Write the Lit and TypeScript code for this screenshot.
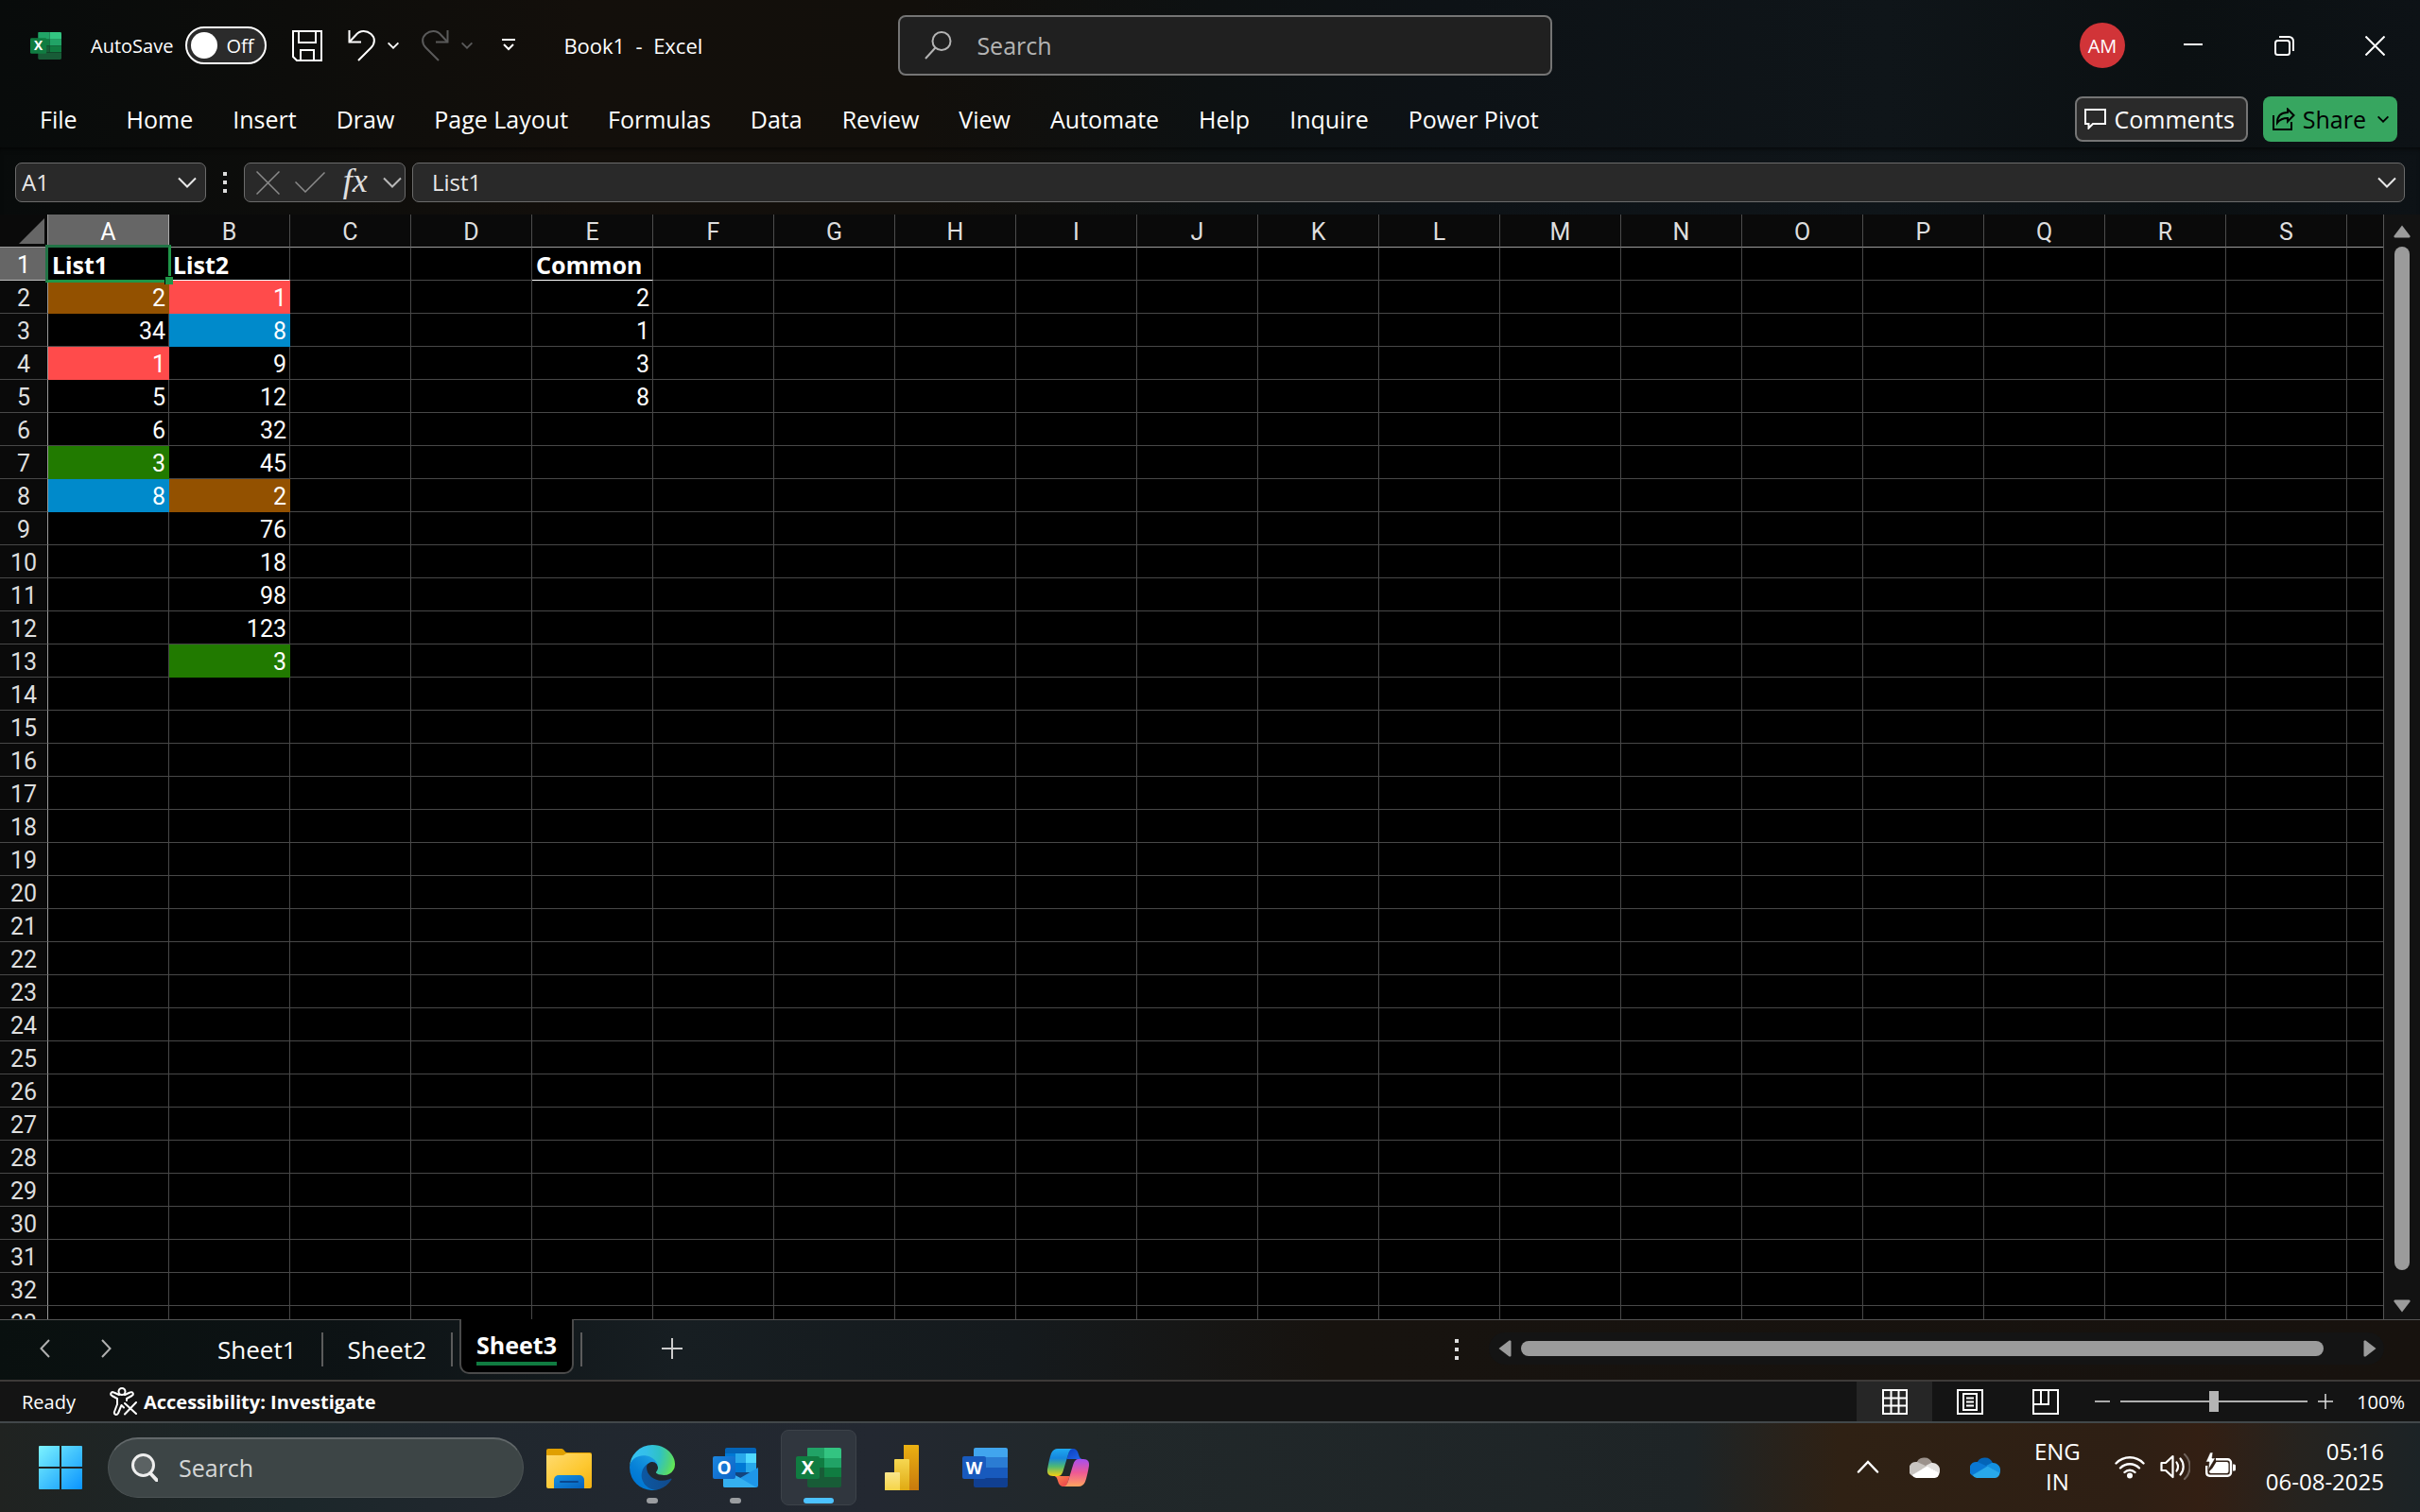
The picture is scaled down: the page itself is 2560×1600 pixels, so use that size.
import { LitElement, html, svg, css, nothing } from "lit";
import { customElement, state } from "lit/decorators.js";
import { classMap } from "lit/directives/class-map.js";

const chevron = (w: number, h: number, sw = 2) => html`<svg width=${w} height=${h} viewBox="0 0 20 12" fill="none" stroke="currentColor" stroke-width=${sw} aria-hidden="true"><path d="M1 1.5 10 10.5 19 1.5" /></svg>`;

const excelLogo = (size: number) => html`<svg width=${size} height=${size} viewBox="0 0 48 48" aria-hidden="true">
  <path d="M13 3h17v11H12V4a1 1 0 0 1 1-1z" fill="#21a366" />
  <path d="M30 3h16a2 2 0 0 1 2 2v9H30z" fill="#33c481" />
  <path d="M12 14h18v10H12z" fill="#107c41" /><path d="M30 14h18v10H30z" fill="#21a366" />
  <path d="M12 24h18v10H12z" fill="#185c37" /><path d="M30 24h18v10H30z" fill="#107c41" />
  <path d="M12 34h36v9a2 2 0 0 1-2 2H14a2 2 0 0 1-2-2z" fill="#185c37" />
  <rect x="0" y="12" width="25" height="24" rx="2" fill="#107c41" />
  <text x="12.5" y="31" text-anchor="middle" font-family="Open Sans, sans-serif" font-weight="700" font-size="20" fill="#fff">X</text>
</svg>`;

const baseStyles = css`
  *, *::before, *::after { box-sizing: border-box; }
  svg { display: block; flex: none; }
  button, input {
    font: inherit; color: inherit; background: none; border: 0; margin: 0; padding: 0; outline: none;
  }
  button { display: flex; align-items: center; justify-content: center; flex: none; white-space: nowrap; }
`;

type Fill = "brown" | "red" | "blue" | "green";
interface Cell { v: string; fill?: Fill; head?: boolean; }

const cells: Record<string, Cell> = {
  A1: { v: "List1", head: true }, B1: { v: "List2", head: true }, E1: { v: "Common", head: true },
  A2: { v: "2", fill: "brown" }, A3: { v: "34" }, A4: { v: "1", fill: "red" }, A5: { v: "5" },
  A6: { v: "6" }, A7: { v: "3", fill: "green" }, A8: { v: "8", fill: "blue" },
  B2: { v: "1", fill: "red" }, B3: { v: "8", fill: "blue" }, B4: { v: "9" }, B5: { v: "12" },
  B6: { v: "32" }, B7: { v: "45" }, B8: { v: "2", fill: "brown" }, B9: { v: "76" }, B10: { v: "18" },
  B11: { v: "98" }, B12: { v: "123" }, B13: { v: "3", fill: "green" },
  E2: { v: "2" }, E3: { v: "1" }, E4: { v: "3" }, E5: { v: "8" },
};
const columns = "ABCDEFGHIJKLMNOPQRS".split("");
const rows = Array.from({ length: 33 }, (_, i) => i + 1);

@customElement("sheet-grid")
export class SheetGrid extends LitElement {
  @state() private selected = "A1";

  static styles = [baseStyles, css`
    :host { display: flex; flex: 1; min-height: 0; background: #000; font-family: Roboto, sans-serif; font-size: 25px; }
    .pane { flex: 1; min-width: 0; overflow: hidden; border-right: 1px solid #555; }
    table { border-collapse: separate; border-spacing: 0; table-layout: fixed; width: 100%; }
    .c-head { width: 51px; }
    .c-col { width: 128px; }
    th, td { height: 35px; padding: 4px 0 0; line-height: 30px; overflow: visible; white-space: nowrap; border-right: 1px solid #484848; border-bottom: 1px solid #484848; }
    th { font-weight: 400; background: #0a0a0a; color: #dedede; text-align: center; }
    thead th { border-bottom-color: #9a9a9a; border-right-color: #4c4c4c; }
    tbody th, .corner { border-right-color: #9a9a9a; }
    th.on { background: #666; color: #fff; border-right-color: #aaa; border-bottom-color: #bbb; }
    .corner { padding: 0; }
    .corner svg { margin: 0 3px 0 auto; }
    td { text-align: right; padding: 4px 3px 0; color: #fff; }
    td.head { text-align: left; font-family: "Noto Sans", sans-serif; font-weight: 700; padding: 2px 4px 0; border-bottom-color: #fff; }
    td.brown { background: #935100; border-color: #935100; }
    td.red { background: #ff4b4b; border-color: #ff4b4b; }
    td.blue { background: #008acb; border-color: #008acb; }
    td.green { background: #217a00; border-color: #217a00; }
    td.rest, th.rest { border-right: 0; }
    td.sel { position: relative; }
    .ring { position: absolute; inset: -3px; border: 3px solid #1f9648; border-top-color: #217346; border-left-color: #217346; }
    .handle { position: absolute; right: -5px; bottom: -5px; width: 9px; height: 9px; background: #1f9648; border: 1px solid #000; border-width: 1px 0 0 1px; }
    .vscroll { width: 38px; background: #121212; display: flex; flex-direction: column; align-items: center; padding: 8px 0 4px; }
    .vscroll button { color: #9b9b9b; height: 20px; }
    .vscroll .thumb { width: 16px; flex: 1; border-radius: 8px; background: #9b9b9b; margin: 6px 0 28px; }
  `];

  render() {
    return html`
      <div class="pane">
        <table aria-label="Sheet3">
          <colgroup><col class="c-head" />${columns.map(() => html`<col class="c-col" />`)}<col /></colgroup>
          <thead><tr>
            <th class="corner" aria-label="Select all"><svg width="27" height="27" viewBox="0 0 27 27"><path d="M27 0v27H0z" fill="#666" /></svg></th>
            ${columns.map((c) => html`<th scope="col" class=${classMap({ on: this.selected.startsWith(c) })}>${c}</th>`)}
            <th class="rest"></th>
          </tr></thead>
          <tbody>
            ${rows.map((r) => html`<tr>
              <th scope="row" class=${classMap({ on: this.selected.slice(1) === String(r) })}>${r}</th>
              ${columns.map((c) => this.cell(c + r))}
              <td class="rest"></td>
            </tr>`)}
          </tbody>
        </table>
      </div>
      <div class="vscroll">
        <button aria-label="Scroll up"><svg width="18" height="14" viewBox="0 0 18 14"><path d="M9 0.5 17.4 11.5a1.3 1.3 0 0 1-1 2H1.600a1.300 1.300 0 0 1-1-2z" fill="currentColor" /></svg></button>
        <div class="thumb"></div>
        <button aria-label="Scroll down"><svg width="18" height="14" viewBox="0 0 18 14"><path d="M9 13.500 17.400 2.500a1.300 1.300 0 0 0-1-2H1.600a1.300 1.300 0 0 0-1 2z" fill="currentColor" /></svg></button>
      </div>`;
  }

  private cell(id: string) {
    const c = cells[id];
    const sel = this.selected === id;
    const cls = { head: !!c?.head, sel, [c?.fill ?? "plain"]: true };
    return html`<td class=${classMap(cls)} @click=${() => (this.selected = id)}>${c?.v ?? nothing}${sel ? html`<span class="ring"></span><span class="handle"></span>` : nothing}</td>`;
  }
}

const folderIcon = html`<svg width="48" height="48" viewBox="0 0 48 48" aria-hidden="true">
  <defs><linearGradient id="fo" x1="0" y1="0" x2="1" y2="1"><stop offset="0" stop-color="#ffdb70" /><stop offset=".6" stop-color="#fdc830" /><stop offset="1" stop-color="#f3b112" /></linearGradient>
  <linearGradient id="fb" x1="0" y1="0" x2="1" y2="1"><stop offset="0" stop-color="#1591e0" /><stop offset="1" stop-color="#0560bd" /></linearGradient></defs>
  <path d="M0 6a2 2 0 0 1 2-2h14c3 0 3 4 6 4h24a2 2 0 0 1 2 2v6H0z" fill="#e0a000" />
  <path d="M0 11h17c2 0 3-2 5-2h24a2 2 0 0 1 2 2v33a2 2 0 0 1-2 2H2a2 2 0 0 1-2-2z" fill="url(#fo)" />
  <path d="M8 46V37a5 5 0 0 1 5-5h22a5 5 0 0 1 5 5v9z" fill="url(#fb)" />
  <path d="M15 39h18" stroke="#08478f" stroke-width="2" stroke-linecap="round" />
</svg>`;

const edgeIcon = html`<svg width="48" height="48" viewBox="0 0 256 256" aria-hidden="true">
  <defs>
    <linearGradient id="e1" x1="63" y1="178" x2="241" y2="178" gradientUnits="userSpaceOnUse"><stop offset="0" stop-color="#0c59a4" /><stop offset="1" stop-color="#114a8b" /></linearGradient>
    <linearGradient id="e2" x1="153" y1="100" x2="46" y2="216" gradientUnits="userSpaceOnUse"><stop offset="0" stop-color="#1b9de2" /><stop offset=".16" stop-color="#1595df" /><stop offset=".67" stop-color="#0680d7" /><stop offset="1" stop-color="#0078d4" /></linearGradient>
    <radialGradient id="e3" cx="26" cy="47" r="240" gradientUnits="userSpaceOnUse"><stop offset="0" stop-color="#35c1f1" /><stop offset=".3" stop-color="#34bfe8" /><stop offset=".6" stop-color="#2fc2c5" /><stop offset=".85" stop-color="#4fd37a" /><stop offset="1" stop-color="#66eb4f" /></radialGradient>
  </defs>
  <path transform="translate(-4.63 -4.92)" fill="url(#e1)" d="M235.680 195.460a93.730 93.730 0 0 1-10.540 4.710 101.870 101.870 0 0 1-35.900 6.460c-47.320 0-88.540-32.550-88.540-74.320A31.480 31.480 0 0 1 117.130 105c-42.800 1.800-53.800 46.400-53.800 72.530 0 73.880 68.090 81.370 82.760 81.370 7.910 0 19.840-2.300 27-4.560l1.310-.44a128.340 128.340 0 0 0 66.600-52.800 4 4 0 0 0-5.320-5.640z" />
  <path fill="url(#e2)" d="M105.730 241.420A79.200 79.200 0 0 1 83 220.080a80.720 80.720 0 0 1 29.500-120.320c3.120-1.470 8.450-4.130 15.540-4a32.350 32.350 0 0 1 25.690 13 31.880 31.880 0 0 1 6.360 18.660c0-.21 24.460-79.600-80-79.600-43.900 0-80 41.660-80 78.210a130.150 130.150 0 0 0 12.110 56 128 128 0 0 0 156.380 67.110 75.550 75.550 0 0 1-62.780-8z" />
  <path fill="url(#e3)" d="M152.330 148.860c-.81 1.050-3.300 2.500-3.300 5.660 0 2.610 1.700 5.120 4.720 7.230 14.380 10 41.490 8.680 41.560 8.680a59.560 59.560 0 0 0 30.270-8.350 61.380 61.380 0 0 0 30.430-52.880c.26-22.410-8-37.310-11.340-43.910C223.480 23.840 177.720 0 128 0A128 128 0 0 0 0 126.200c.48-36.540 36.800-66.050 80-66.050 3.500 0 23.460.34 42 10.070 16.340 8.580 24.900 18.940 30.850 29.210 6.180 10.670 7.280 24.150 7.280 29.520s-2.740 13.330-7.800 19.910z" />
</svg>`;

const outlookIcon = html`<svg width="48" height="48" viewBox="0 0 48 48" aria-hidden="true">
  <defs><linearGradient id="ol" x1="0" y1="0" x2="1" y2="1"><stop offset="0" stop-color="#1b86e0" /><stop offset="1" stop-color="#0c62c4" /></linearGradient></defs>
  <path d="M15 3h29a2 2 0 0 1 2 2v4H13V5a2 2 0 0 1 2-2z" fill="#0364b8" />
  <path d="M13 9h11v10H13z" fill="#0078d4" /><path d="M24 9h11v10H24z" fill="#28a8ea" /><path d="M35 9h11v10H35z" fill="#50d9ff" />
  <path d="M13 19h11v10H13z" fill="#0364b8" /><path d="M24 19h11v10H24z" fill="#0078d4" /><path d="M35 19h11v10H35z" fill="#28a8ea" />
  <path d="M13 29h33v6H13z" fill="#14447d" />
  <path d="M48 24v19a2 2 0 0 1-2 2H13a2 2 0 0 1-2-2V25l18 10z" fill="#1e96e8" />
  <path d="M29 35 11 26v17a2 2 0 0 0 2 2h33z" fill="#35b0f0" />
  <rect x="0" y="12" width="24" height="24" rx="2" fill="url(#ol)" />
  <text x="12" y="31" text-anchor="middle" font-family="Open Sans, sans-serif" font-weight="700" font-size="19" fill="#fff">O</text>
</svg>`;

const wordIcon = html`<svg width="48" height="48" viewBox="0 0 48 48" aria-hidden="true">
  <path d="M14 3h32a2 2 0 0 1 2 2v8H12V5a2 2 0 0 1 2-2z" fill="#41a5ee" />
  <path d="M12 13h36v11H12z" fill="#2b7cd3" /><path d="M12 24h36v11H12z" fill="#185abd" />
  <path d="M12 35h36v8a2 2 0 0 1-2 2H14a2 2 0 0 1-2-2z" fill="#103f91" />
  <rect x="0" y="12" width="25" height="24" rx="2" fill="#185abd" />
  <text x="12.500" y="31" text-anchor="middle" font-family="Open Sans, sans-serif" font-weight="700" font-size="18" fill="#fff">W</text>
</svg>`;

const powerIcon = html`<svg width="48" height="48" viewBox="0 0 48 48" aria-hidden="true">
  <defs><linearGradient id="p1" x1="0" y1="0" x2="0" y2="1"><stop offset="0" stop-color="#ebb112" /><stop offset="1" stop-color="#c8790d" /></linearGradient>
  <linearGradient id="p2" x1="0" y1="0" x2="0" y2="1"><stop offset="0" stop-color="#f6d751" /><stop offset="1" stop-color="#e0aa12" /></linearGradient>
  <linearGradient id="p3" x1="0" y1="0" x2="0" y2="1"><stop offset="0" stop-color="#fae68c" /><stop offset="1" stop-color="#f5d447" /></linearGradient></defs>
  <path d="M26 0h15a1 1 0 0 1 1 1v47H26z" fill="url(#p1)" /><path d="M16 16a1 1 0 0 1 1-1h14a1 1 0 0 1 1 1v32H16z" fill="url(#p2)" />
  <path d="M6 30a1 1 0 0 1 1-1h14a1 1 0 0 1 1 1v18H6z" fill="url(#p3)" />
</svg>`;

const band = "M13 4H29C26 4 25 7 24 10L18.500 28C17.500 31 16 33 13 33H8C3 33 1.500 30 2 26 3 20 4.500 13 6 9 7.500 5.500 10 4 13 4z";
const fold = "M27 4h2c3.500 0 5 2.500 6 6 .7 2.500 1.500 5 4.500 5H22.500L24 10C25 7 25.500 4 27 4z";
const copilotIcon = html`<svg width="48" height="48" viewBox="0 0 48 48" aria-hidden="true">
  <defs>
    <linearGradient id="c1" x1="0" y1="0" x2="0" y2="1"><stop offset="0" stop-color="#1fa8f0" /><stop offset=".35" stop-color="#1687dd" /><stop offset=".65" stop-color="#4fb973" /><stop offset="1" stop-color="#f5cf10" /></linearGradient>
    <linearGradient id="c2" x1="0" y1="1" x2="0" y2="0"><stop offset="0" stop-color="#a64ff0" /><stop offset=".5" stop-color="#ef5a94" /><stop offset="1" stop-color="#ffa45e" /></linearGradient>
    <linearGradient id="c3" x1="0" y1="0" x2="1" y2="1"><stop offset="0" stop-color="#0a3fc0" /><stop offset="1" stop-color="#2266e8" /></linearGradient>
    <linearGradient id="c4" x1="0" y1="0" x2="1" y2="1"><stop offset="0" stop-color="#ea3c4c" /><stop offset="1" stop-color="#ff8a4c" /></linearGradient>
  </defs>
  <path d=${fold} fill="url(#c3)" /><path d=${fold} fill="url(#c4)" transform="rotate(180 24 24)" />
  <path d=${band} fill="url(#c1)" /><path d=${band} fill="url(#c2)" transform="rotate(180 24 24)" />
</svg>`;

const cloud = (a: string, b: string, c: string, d: string) => html`<svg width="32" height="25" viewBox="0 0 32 25" aria-hidden="true">
  <path d="M7 10a9 9 0 0 1 17-1l-4 9-13-4z" fill=${a} />
  <path d="M8 8A8 8 0 0 0 2.500 22.500L19 13z" fill=${b} />
  <path d="M23 9a8 8 0 0 1 8.500 11L17 12z" fill=${c} />
  <path d="M2.500 22 18.500 12.500 31.500 19.500a5.500 5.500 0 0 1-5 5.500H7a7 7 0 0 1-4.500-3z" fill=${d} />
</svg>`;

@customElement("task-bar")
export class TaskBar extends LitElement {
  static styles = [baseStyles, css`
    :host {
      display: flex; align-items: center; height: 96px; flex: none; color: #fff; border-top: 2px solid #42484a;
      font-family: "Open Sans", "Noto Sans", sans-serif; padding: 0 38px 0 41px;
      background: linear-gradient(90deg, #202321 0%, #1c272a 12%, #20272e 20%, #232831 36%, #21282a 45%, #1e2426 70%, #2f2114 76%, #2e1f14 88%, #331f13 91%, #26231f 95%, #1c2326 100%);
    }
    .find { display: flex; align-items: center; gap: 22px; width: 440px; height: 64px; margin-left: 27px; padding: 0 24px; border-radius: 32px; background: #3d4546; border: 1px solid #4c5354; border-top: 2px solid #62686a; }
    .find input { flex: 1; min-width: 0; font-size: 25px; line-height: 32px; padding-bottom: 2px; color: #d4d6d6; }
    .find input::placeholder { color: #d4d6d6; opacity: 1; }
    .find svg { margin-bottom: 2px; }
    .apps { display: flex; gap: 8px; margin-left: 8px; }
    .app { position: relative; width: 80px; height: 80px; border-radius: 8px; border: 1px solid transparent; }
    .app.active { background: #30363e; border-color: #3c4249; }
    .mark { position: absolute; bottom: 1px; left: 33px; width: 12px; height: 6px; border-radius: 3px; background: #9a9da0; }
    .active .mark { left: 23px; width: 32px; background: #4cc2ff; }
    .tray { display: flex; align-items: center; margin-left: auto; padding-bottom: 3px; }
    .group { display: flex; align-items: center; gap: 32px; }
    .status { gap: 16px; margin: 0 32px 0 36px; }
    .lang { margin-left: 36px; }
    .lang, .clock { display: block; font-size: 24px; line-height: 32px; }
    .clock { text-align: right; }
    .lang span, .clock span { display: block; }
  `];

  render() {
    const apps = [
      ["File Explorer", folderIcon, ""], ["Edge", edgeIcon, "run"], ["Outlook", outlookIcon, "run"],
      ["Excel", excelLogo(48), "active"], ["Power BI", powerIcon, ""], ["Word", wordIcon, ""], ["Copilot", copilotIcon, ""],
    ] as const;
    return html`
      <button aria-label="Start"><svg width="46" height="46" viewBox="0 0 46 46">
        <defs><linearGradient id="w" x1="0" y1="0" x2="46" y2="46" gradientUnits="userSpaceOnUse"><stop offset="0" stop-color="#7df3ff" /><stop offset=".5" stop-color="#42c3fd" /><stop offset="1" stop-color="#0a94ff" /></linearGradient></defs>
        <path fill="url(#w)" d="M1 0h21v22H0V1a1 1 0 0 1 1-1zM24 0h21a1 1 0 0 1 1 1v21H24zM0 24h22v22H1a1 1 0 0 1-1-1zM24 24h22v21a1 1 0 0 1-1 1H24z" /></svg></button>
      <label class="find">
        <svg width="28" height="30" viewBox="0 0 28 30" fill="none" stroke="#eee" aria-hidden="true"><circle cx="12.500" cy="12.500" r="11" stroke-width="3" fill="#5b6263" /><path d="M20 21 27 28.500" stroke-width="4" stroke-linecap="round" /></svg>
        <input type="search" aria-label="Search Windows" placeholder="Search" />
      </label>
      <div class="apps">
        ${apps.map(([name, icon, st]) => html`<button class=${classMap({ app: true, active: st === "active" })} aria-label=${name}>${icon}${st ? html`<span class="mark"></span>` : nothing}</button>`)}
      </div>
      <div class="tray">
        <div class="group">
          <button aria-label="Show hidden icons"><svg width="24" height="14" viewBox="0 0 24 14" fill="none" stroke="#fff" stroke-width="2.500" stroke-linecap="round"><path d="M2 12.500 12 2 22 12.500" /></svg></button>
          <button aria-label="OneDrive personal">${cloud("#9b928c", "#c8c4c0", "#e3e1df", "#ffffff")}</button>
          <button aria-label="OneDrive">${cloud("#0364b8", "#0a78d4", "#1490df", "#28a8ea")}</button>
        </div>
        <button class="lang"><span>ENG</span><span>IN</span></button>
        <div class="group status">
          <svg width="32" height="26" viewBox="0 0 32 26" fill="none" stroke="#fff" stroke-width="2.400" stroke-linecap="round" aria-hidden="true"><path d="M1.500 9.500a20 20 0 0 1 29 0M6 14.500a14 14 0 0 1 20 0M10.500 19a8 8 0 0 1 11 0" /><circle cx="16" cy="22.500" r="3" fill="#fff" stroke="none" /></svg>
          <svg width="32" height="32" viewBox="0 0 32 32" fill="none" stroke="#fff" stroke-width="2.200" stroke-linejoin="round" stroke-linecap="round" aria-hidden="true"><path d="M1.500 12v8h4.500L13.500 27V5L6 12z" /><path d="M17.500 11.500a8 8 0 0 1 0 9M21.500 7.500a13 13 0 0 1 0 17" /><path d="M26 3a18 18 0 0 1 0 26" stroke="#6d6058" /></svg>
          <svg width="32" height="32" viewBox="0 0 32 32" aria-hidden="true"><path d="M11 8.200h12.500A3.500 3.500 0 0 1 27 11.700v10.600a3.500 3.500 0 0 1-3.500 3.500h-19A3.500 3.500 0 0 1 1.200 22.300V15" fill="none" stroke="#fff" stroke-width="2.400" /><path d="M11.500 11H22.500a2 2 0 0 1 2 2v8a2 2 0 0 1-2 2H6a2 2 0 0 1-2-2l3.500-3.500z" fill="#fff" /><path d="M29 13.500h1.500a1.500 1.500 0 0 1 1.500 1.500v4a1.500 1.500 0 0 1-1.500 1.500H29z" fill="#fff" /><path d="M5 1 .5 11H4L3 19.500 10.500 7H7l1-6z" fill="#fff" stroke="#2e1f14" stroke-width=".6" /></svg>
        </div>
        <button class="clock"><span>05:16</span><span>06-08-2025</span></button>
      </div>`;
  }
}

@customElement("app-root")
export class AppRoot extends LitElement {
  @state() private sheet = "Sheet3";

  static styles = [baseStyles, css`
    :host { display: flex; flex-direction: column; height: 100vh; overflow: hidden; color: #fff; font-family: "Open Sans", "Noto Sans", sans-serif; font-size: 25px; background: #000; }
    .top { flex: none; background: linear-gradient(90deg, #080b0b 0%, #0d0d0b 12%, #130f0b 24%, #120f0b 38%, #0d1112 50%, #0d1216 60%, #0f1519 78%, #0b1012 90%, #0d1216 100%); }
    .title { display: flex; align-items: center; height: 96px; padding-left: 32px; font-size: 20px; }
    .quick { display: flex; align-items: center; flex: 1; }
    .auto { display: flex; align-items: center; gap: 13px; margin-left: 31px; }
    .switch { display: flex; align-items: center; gap: 9px; width: 86px; height: 40px; padding-left: 4px; border: 2px solid #fff; border-radius: 20px; background: #2b2b2b; }
    .switch input { appearance: none; width: 28px; height: 28px; border-radius: 50%; background: #fff; }
    .save { margin-left: 27px; }
    .undo { margin-left: 27px; }
    .redo { margin-left: 24px; color: #5a5a5a; }
    .undo, .redo { gap: 13px; }
    .more { margin-left: 30px; }
    .book { margin-left: 50px; font-size: 22px; white-space: pre; }
    .search { display: flex; align-items: center; gap: 26px; width: 27vw; height: 64px; padding: 0 26px; background: #202020; border: 2px solid #757575; border-radius: 8px; color: #b4b4b4; font-size: 25px; }
    .search input { flex: 1; min-width: 0; }
    .search input::placeholder { color: #b4b4b4; opacity: 1; }
    .window { display: flex; flex: 1; align-items: center; justify-content: flex-end; }
    .avatar { width: 48px; height: 48px; border-radius: 50%; background: #d13438; font-size: 20px; margin-right: 24px; }
    .win { width: 96px; height: 96px; }
    .ribbon { display: flex; align-items: center; height: 60px; padding: 0 24px 0 21px; }
    .tabs { display: flex; }
    .tabs button { height: 60px; padding: 0 21px; }
    .tabs button:first-child { margin-right: 10px; }
    .actions { display: flex; gap: 16px; margin-left: auto; }
    .action { height: 48px; border-radius: 8px; }
    .comments { border: 2px solid #757575; background: #2a2a2a; gap: 9px; padding: 0 12px 0 8px; }
    .share { background: #37a660; color: #000; gap: 8px; padding: 0 9px 0 10px; }
    .share .arrow { margin-left: 4px; }
    .formula { display: flex; align-items: center; height: 71px; padding: 3px 16px 0; font-size: 24px; box-shadow: inset 0 4px 6px -4px #000; }
    .box { display: flex; align-items: center; height: 42px; border: 1px solid #6b6b6b; border-radius: 7px; background: #292929; color: #e8e8e8; }
    .name { width: 202px; padding: 0 9px 0 6px; }
    .name input, .entry input { flex: 1; min-width: 0; padding-bottom: 2px; }
    .grip { margin: 0 18px; }
    .fx { width: 171px; padding: 0 3px 0 12px; justify-content: space-between; color: #8a8a8a; }
    .fx .lit { color: #b8b8b8; }
    .fn { font-family: "Liberation Serif", serif; font-style: italic; font-size: 36px; line-height: 36px; color: #e0e0e0; padding: 0 0 4px 2px; }
    .entry { flex: 1; margin-left: 7px; padding: 0 8px 0 20px; }
    .sheets { display: flex; height: 64px; flex: none; border-top: 1px solid #555; padding-right: 38px; background: linear-gradient(90deg, #09100f 0%, #0d1315 15%, #171e22 28%, #151a1d 42%, #17130f 55%, #17120e 100%); }
    .nav { display: flex; align-items: center; gap: 54px; padding: 0 86px 4px 42px; color: #b0b0b0; }
    .tab { height: 62px; padding: 0 26px; font-size: 26px; }
    .tab.on { height: 58px; margin: -1px 7px 0 7px; padding: 0 16px; background: #000; border: 2px solid #4a4a4a; border-top: 0; border-radius: 0 0 10px 10px; font-weight: 700; font-size: 25px; }
    .tab.on span { border-bottom: 4px solid #107c41; line-height: 36px; padding-top: 2px; }
    .sep { width: 2px; height: 36px; margin-top: 13px; background: #5c5c5c; }
    .add { margin: 0 0 4px 84px; }
    .hgrip { margin: 20px 32px 0 auto; }
    .hscroll { display: flex; align-items: center; width: 37vw; height: 34px; margin-top: 13px; padding: 0 8px 0 10px; background: #141414; border-radius: 17px; color: #9b9b9b; }
    .hthumb { flex: 1; height: 16px; margin: 0 42px 0 10px; border-radius: 8px; background: #9b9b9b; }
    .status { display: flex; align-items: center; height: 44px; flex: none; padding: 0 16px 0 23px; background: #141414; border-top: 2px solid #3d3a38; font-size: 20px; }
    .access { gap: 6px; margin-left: 36px; font-weight: 700; }
    .views { display: flex; margin-left: auto; }
    .views button { width: 80px; height: 42px; }
    .views .on { background: #262626; }
    .zoom { display: flex; align-items: center; gap: 11px; margin-left: 12px; }
    .zoom input { appearance: none; width: 198px; height: 22px; background: linear-gradient(#b0b0b0, #b0b0b0) center / 100% 2px no-repeat; }
    .zoom input::-webkit-slider-thumb { appearance: none; width: 10px; height: 22px; background: #b4b4b4; }
    .percent { margin-left: 25px; }
  `];

  private undo() {
    return svg`<path d="M1.500 0v12.500H14" /><path d="M1.500 12.500 8.500 5C13-.3 20 .2 24.500 4S29 14 24.500 18.500L11 32" />`;
  }

  render() {
    const menu = ["File", "Home", "Insert", "Draw", "Page Layout", "Formulas", "Data", "Review", "View", "Automate", "Help", "Inquire", "Power Pivot"];
    return html`
      <header class="top">
        <div class="title">
          <div class="quick">
            ${excelLogo(33)}
            <label class="auto">AutoSave<span class="switch"><input type="checkbox" role="switch" aria-label="AutoSave" />Off</span></label>
            <button class="save" aria-label="Save"><svg width="32" height="33" viewBox="0 0 32 33" fill="none" stroke="#fff" stroke-width="2"><path d="M1 1h30v31H5l-4-4z" /><path d="M7 1v12h18V1M9 32V21h14v11" /></svg></button>
            <button class="undo" aria-label="Undo"><svg width="29" height="33" viewBox="0 0 29 33" fill="none" stroke="currentColor" stroke-width="2">${this.undo()}</svg>${chevron(12, 8, 3)}</button>
            <button class="redo" aria-label="Redo"><svg width="29" height="33" viewBox="0 0 29 33" fill="none" stroke="currentColor" stroke-width="2"><g transform="matrix(-1 0 0 1 29 0)">${this.undo()}</g></svg>${chevron(12, 8, 3)}</button>
            <button class="more" aria-label="Customize Quick Access Toolbar"><svg width="16" height="14" viewBox="0 0 16 14" fill="none" stroke="#fff" stroke-width="2"><path d="M1 1h14M3 6l5 5 5-5" /></svg></button>
            <span class="book">Book1  -  Excel</span>
          </div>
          <label class="search">
            <svg width="29" height="30" viewBox="0 0 29 30" fill="none" stroke="currentColor" stroke-width="2" aria-hidden="true"><circle cx="18" cy="10.500" r="9.500" /><path d="M11.500 17.500 1 29" /></svg>
            <input type="search" aria-label="Search" placeholder="Search" />
          </label>
          <div class="window">
            <button class="avatar" aria-label="Account">AM</button>
            <button class="win" aria-label="Minimize"><svg width="20" height="20" viewBox="0 0 20 20"><path d="M0 9h20" stroke="#fff" stroke-width="2" /></svg></button>
            <button class="win" aria-label="Restore"><svg width="21" height="21" viewBox="0 0 21 21" fill="none" stroke="#fff" stroke-width="2"><rect x="1" y="5" width="15" height="15" rx="2.500" /><path d="M5 1h10.500A4.500 4.500 0 0 1 20 5.500V16" /></svg></button>
            <button class="win" aria-label="Close"><svg width="21" height="21" viewBox="0 0 21 21" stroke="#fff" stroke-width="2"><path d="M.5.5 20.500 20.500M20.500.5.5 20.500" /></svg></button>
          </div>
        </div>
        <div class="ribbon">
          <nav class="tabs">${menu.map((m) => html`<button>${m}</button>`)}</nav>
          <div class="actions">
            <button class="action comments"><svg width="23" height="22" viewBox="0 0 23 22" fill="none" stroke="#fff" stroke-width="2"><path d="M1 1h21v15H9l-4.500 4.500V16H1z" /></svg>Comments</button>
            <button class="action share"><svg width="24" height="24" viewBox="0 0 24 24" fill="none" stroke="#000" stroke-width="2"><path d="M1 8v15h19v-8" /><path d="M16 1.500 22.500 8 16 14.500V11c-5 0-8 1-11 5 0-7 4-11 11-11z" /></svg>Share<span class="arrow">${chevron(12, 8, 3)}</span></button>
          </div>
        </div>
        <div class="formula">
          <div class="box name"><input aria-label="Name Box" value="A1" /><button aria-label="Name list">${chevron(20, 12)}</button></div>
          <svg class="grip" width="4" height="22" viewBox="0 0 4 22" fill="#ddd" aria-hidden="true"><path d="M0 0h4v4H0zM0 9h4v4H0zM0 18h4v4H0z" /></svg>
          <div class="box fx">
            <button aria-label="Cancel"><svg width="25" height="25" viewBox="0 0 25 25" stroke="currentColor" stroke-width="1.500"><path d="M.5.5 24.500 24.500M24.500.5.5 24.500" /></svg></button>
            <button aria-label="Enter"><svg width="32" height="22" viewBox="0 0 32 22" fill="none" stroke="currentColor" stroke-width="1.500"><path d="M.5 10.500 11 21 31.500.5" /></svg></button>
            <button class="fn" aria-label="Insert Function">fx</button>
            <button class="lit" aria-label="Functions">${chevron(20, 12)}</button>
          </div>
          <div class="box entry"><input aria-label="Formula bar" value="List1" /><button aria-label="Expand formula bar">${chevron(20, 12)}</button></div>
        </div>
      </header>
      <sheet-grid></sheet-grid>
      <div class="sheets">
        <div class="nav">
          <button aria-label="Previous sheet"><svg width="11" height="20" viewBox="0 0 11 20" fill="none" stroke="currentColor" stroke-width="2"><path d="M10 1 1.500 10 10 19" /></svg></button>
          <button aria-label="Next sheet"><svg width="11" height="20" viewBox="0 0 11 20" fill="none" stroke="currentColor" stroke-width="2"><path d="M1 1 9.500 10 1 19" /></svg></button>
        </div>
        ${["Sheet1", "Sheet2", "Sheet3"].map((s) => html`<button class=${classMap({ tab: true, on: this.sheet === s })} @click=${() => (this.sheet = s)}><span>${s}</span></button><span class="sep"></span>`)}
        <button class="add" aria-label="New sheet"><svg width="22" height="22" viewBox="0 0 22 22" stroke="#ccc" stroke-width="2"><path d="M11 0v22M0 11h22" /></svg></button>
        <svg class="hgrip" width="4" height="22" viewBox="0 0 4 22" fill="#ddd" aria-hidden="true"><path d="M0 0h4v4H0zM0 9h4v4H0zM0 18h4v4H0z" /></svg>
        <div class="hscroll">
          <button aria-label="Scroll left"><svg width="14" height="18" viewBox="0 0 14 18"><path d="M.5 9 11.500.6a1.300 1.300 0 0 1 2 1v14.800a1.300 1.300 0 0 1-2 1z" fill="currentColor" /></svg></button>
          <div class="hthumb"></div>
          <button aria-label="Scroll right"><svg width="14" height="18" viewBox="0 0 14 18"><path d="M13.500 9 2.500.6a1.300 1.300 0 0 0-2 1v14.800a1.300 1.300 0 0 0 2 1z" fill="currentColor" /></svg></button>
        </div>
      </div>
      <footer class="status">
        <span>Ready</span>
        <button class="access"><svg width="30" height="30" viewBox="0 0 30 30" fill="none" stroke="#fff" stroke-width="2" stroke-linejoin="round" stroke-linecap="round" aria-hidden="true"><circle cx="13" cy="4.500" r="3.500" /><path d="M10 8 4.500 5.500C1.500 4 0 7.500 2.500 9L8 12v6L5 26c-.8 3 2.500 4 4 1.500L12.500 19l2.500 2.500M16 8l5.500-2.500c3-1.500 4.500 2 2 3.500L18 12v2M16 17l12 11M28 16 16 28.500" /></svg>Accessibility: Investigate</button>
        <div class="views">
          <button class="on" aria-label="Normal view"><svg width="27" height="27" viewBox="0 0 27 27" fill="none" stroke="#fff" stroke-width="2"><path d="M1 1h25v25H1zM9.500 1v25M17.500 1v25M1 9.500h25M1 17.500h25" /></svg></button>
          <button aria-label="Page Layout view"><svg width="28" height="27" viewBox="0 0 28 27" fill="none" stroke="#fff" stroke-width="2"><path d="M1 1h26v25H1z" /><path d="M7 5h14v17H7zM10 9.500h8M10 13.500h8M10 17.500h8" /></svg></button>
          <button aria-label="Page Break Preview"><svg width="28" height="27" viewBox="0 0 28 27" fill="none" stroke="#fff" stroke-width="2"><path d="M1 1h26v25H1zM1 16h16V1M9 1v15" /></svg></button>
        </div>
        <div class="zoom">
          <button aria-label="Zoom out"><svg width="16" height="16" viewBox="0 0 16 16" stroke="#ddd" stroke-width="1.500"><path d="M0 8h16" /></svg></button>
          <input type="range" aria-label="Zoom" min="0" max="100" value="50" />
          <button aria-label="Zoom in"><svg width="16" height="16" viewBox="0 0 16 16" stroke="#ddd" stroke-width="1.500"><path d="M0 8h16M8 0v16" /></svg></button>
        </div>
        <span class="percent">100%</span>
      </footer>
      <task-bar></task-bar>`;
  }
}
